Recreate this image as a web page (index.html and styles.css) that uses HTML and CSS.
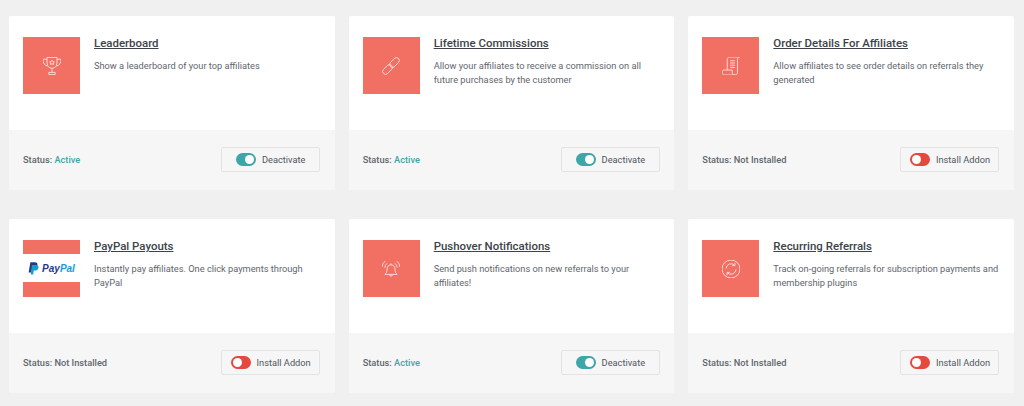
FILE: index.html
```html
<!DOCTYPE html>
<html>
  <head>
    <link rel="stylesheet" href="styles.css">
    <title>Addons</title>
  </head>
  <body>
    <div class="addon-grid">

      <div class="addon-card">
        <div class="addon-body">
          <div class="addon-icon">
            <svg viewBox="2.8 3 14.4 13.800" class="icon-svg">
              <path d="M6 3h8v4.500c0 2.500-1.800 4.200-4 4.200s-4-1.700-4-4.200z"/>
              <path d="M6 4.500H2.800c0 3 1 4.800 3.800 5.500M14 4.500h3.200c0 3-1 4.800-3.800 5.500"/>
              <path d="M10 11.700v3.300M7.500 15h5v1.800h-5z"/>
              <path d="M10 5.200l.7 1.200 1.200.2-.9.900.2 1.200-1.200-.6-1.200.6.200-1.200-.9-.9 1.200-.2z"/>
            </svg>
          </div>
          <div class="addon-text">
            <a class="addon-title">Leaderboard</a>
            <p class="addon-desc">Show a leaderboard of your top affiliates</p>
          </div>
        </div>
        <div class="addon-footer">
          <span class="addon-status">Status: <span class="status-active">Active</span></span>
          <button class="addon-button"><span class="toggle toggle-on"></span>Deactivate</button>
        </div>
      </div>

      <div class="addon-card">
        <div class="addon-body">
          <div class="addon-icon">
            <svg viewBox="3.500 3.500 13 13" class="icon-svg">
              <rect x="8.400" y="5.400" width="8.200" height="4.200" rx="2.100" transform="rotate(-45 12.500 7.500)"/>
              <rect x="3.400" y="10.400" width="8.200" height="4.200" rx="2.100" transform="rotate(-45 7.500 12.500)"/>
            </svg>
          </div>
          <div class="addon-text">
            <a class="addon-title">Lifetime Commissions</a>
            <p class="addon-desc">Allow your affiliates to receive a commission on all future purchases by the customer</p>
          </div>
        </div>
        <div class="addon-footer">
          <span class="addon-status">Status: <span class="status-active">Active</span></span>
          <button class="addon-button"><span class="toggle toggle-on"></span>Deactivate</button>
        </div>
      </div>

      <div class="addon-card">
        <div class="addon-body">
          <div class="addon-icon">
            <svg viewBox="2.500 2.500 14 14.500" class="icon-svg">
              <path d="M6.500 13V4.500C6.500 3.300 7.200 2.500 8.500 2.500h8c-1.200 0-1.800.8-1.800 2v10.500c0 1.200-.8 2-2 2"/>
              <path d="M2.500 14.500c0-1 .6-1.500 1.500-1.500h6.500v2c0 1.200.8 2 2.200 2H4.200c-1 0-1.700-.7-1.700-1.700z"/>
              <path d="M8.800 5.500h3.800M8.800 7.300h3.800M8.800 9.100h3.800M8.800 10.900h3.800"/>
            </svg>
          </div>
          <div class="addon-text">
            <a class="addon-title">Order Details For Affiliates</a>
            <p class="addon-desc">Allow affiliates to see order details on referrals they generated</p>
          </div>
        </div>
        <div class="addon-footer">
          <span class="addon-status">Status: Not Installed</span>
          <button class="addon-button"><span class="toggle toggle-off"></span>Install Addon</button>
        </div>
      </div>

      <div class="addon-card">
        <div class="addon-body">
          <div class="addon-icon addon-icon-paypal">
            <div class="paypal-strip">
              <svg viewBox="0 0 14 16" class="paypal-mark">
                <path fill="#253b80" d="M3 0h5.500c2.800 0 4 1.600 3.500 3.900-.5 2.700-2.400 4-4.900 4H5.100L4.200 13H.8z"/>
                <path fill="#179bd7" d="M5 3.500h4.800c2.600 0 3.900 1.300 3.500 3.500-.5 2.500-2.200 3.700-4.500 3.700H7.300L6.600 15.500H3.600z"/>
              </svg>
              <span class="paypal-word"><span class="pay-dark">Pay</span><span class="pay-light">Pal</span></span>
            </div>
          </div>
          <div class="addon-text">
            <a class="addon-title">PayPal Payouts</a>
            <p class="addon-desc">Instantly pay affiliates. One click payments through PayPal</p>
          </div>
        </div>
        <div class="addon-footer">
          <span class="addon-status">Status: Not Installed</span>
          <button class="addon-button"><span class="toggle toggle-off"></span>Install Addon</button>
        </div>
      </div>

      <div class="addon-card">
        <div class="addon-body">
          <div class="addon-icon">
            <svg viewBox="2 3.200 16 14" class="icon-svg">
              <path d="M10 6.500c-2.300 0-3.500 1.700-3.500 3.800 0 2.300-.6 3.700-2 4.700h11c-1.400-1-2-2.400-2-4.700 0-2.100-1.200-3.800-3.500-3.800z"/>
              <path d="M8.700 15.200a1.300 1.300 0 0 0 2.600 0M10 5.200v1.300"/>
              <path d="M6.500 5.200A5 5 0 0 0 4.500 9M4.800 3.200A7.500 7.500 0 0 0 2 8.500M13.500 5.200a5 5 0 0 1 2 3.800M15.200 3.200A7.500 7.500 0 0 1 18 8.500"/>
            </svg>
          </div>
          <div class="addon-text">
            <a class="addon-title">Pushover Notifications</a>
            <p class="addon-desc">Send push notifications on new referrals to your affiliates!</p>
          </div>
        </div>
        <div class="addon-footer">
          <span class="addon-status">Status: <span class="status-active">Active</span></span>
          <button class="addon-button"><span class="toggle toggle-on"></span>Deactivate</button>
        </div>
      </div>

      <div class="addon-card">
        <div class="addon-body">
          <div class="addon-icon">
            <svg viewBox="1.500 1.500 17 17" class="icon-svg">
              <circle cx="10" cy="10" r="8.500"/>
              <path d="M5.300 9.500a4.800 4.800 0 0 1 8.200-3M14.700 10.500a4.800 4.800 0 0 1-8.200 3"/>
              <path d="M13.700 4.200v2.600h-2.600M6.300 15.800v-2.600h2.600"/>
            </svg>
          </div>
          <div class="addon-text">
            <a class="addon-title">Recurring Referrals</a>
            <p class="addon-desc">Track on-going referrals for subscription payments and membership plugins</p>
          </div>
        </div>
        <div class="addon-footer">
          <span class="addon-status">Status: Not Installed</span>
          <button class="addon-button"><span class="toggle toggle-off"></span>Install Addon</button>
        </div>
      </div>

    </div>
  </body>
</html>
```

FILE: styles.css
```css
body {
  margin: 0;
  background-color: #f0f0f0;
  font-family: Roboto, "Liberation Sans", sans-serif;
  color: #50575e;
}

.addon-grid {
  display: grid;
  grid-template-columns: repeat(3, 1fr);
  column-gap: 14px;
  row-gap: 29px;
  padding: 16px 10px 0 9px;
}

.addon-card {
  height: 174px;
  background-color: white;
  border-radius: 2px;
  display: flex;
  flex-direction: column;
  overflow: hidden;
}

.addon-body {
  height: 114px;
  box-sizing: border-box;
  padding: 21px 14px 0 14px;
  display: flex;
  gap: 14px;
}

.addon-icon {
  width: 57px;
  height: 57px;
  flex-shrink: 0;
  background-color: #f26f63;
  display: flex;
  align-items: center;
  justify-content: center;
}

.icon-svg {
  width: 18px;
  height: 18px;
  fill: none;
  stroke: #fcd9d5;
  stroke-width: 1;
}

.icon-svg * {
  vector-effect: non-scaling-stroke;
}

.addon-icon-paypal {
  align-items: stretch;
  padding: 14px 0 15px 0;
  box-sizing: border-box;
}

.paypal-strip {
  flex: 1;
  background-color: white;
  display: flex;
  align-items: center;
  justify-content: center;
  gap: 3px;
}

.paypal-mark {
  width: 11px;
  height: 13px;
}

.paypal-word {
  font-family: "Liberation Sans", sans-serif;
  font-size: 10px;
  font-weight: bold;
  font-style: italic;
}

.pay-dark {
  color: #253b80;
}

.pay-light {
  color: #179bd7;
}

.addon-text {
  flex: 1;
}

.addon-title {
  display: block;
  width: fit-content;
  font-size: 11.450px;
  line-height: 13px;
  font-weight: 500;
  color: #3c434a;
  text-decoration: underline;
}

.addon-desc {
  margin: 9px 0 0 0;
  font-size: 9.250px;
  line-height: 14px;
  color: #5f666d;
}

.addon-footer {
  flex: 1;
  background-color: #f6f6f6;
  display: flex;
  align-items: center;
  justify-content: space-between;
  padding: 0 14.500px 1px 14px;
}

.addon-status {
  font-size: 9.250px;
  font-weight: 500;
  color: #5f666d;
}

.status-active {
  color: #3fa5a8;
}

.addon-button {
  width: 99px;
  height: 25px;
  display: flex;
  align-items: center;
  justify-content: center;
  gap: 6px;
  padding: 0;
  background-color: #f6f6f6;
  border: 1px solid #e3e3e3;
  border-radius: 2px;
  font-family: Roboto, "Liberation Sans", sans-serif;
  font-size: 9.250px;
  color: #50575e;
}

.toggle {
  position: relative;
  width: 20px;
  height: 13px;
  border-radius: 7px;
  display: inline-block;
}

.toggle::after {
  content: "";
  position: absolute;
  top: 2px;
  width: 9px;
  height: 9px;
  border-radius: 50%;
  background-color: white;
}

.toggle-on {
  background-color: #3fa5a8;
}

.toggle-on::after {
  right: 2px;
}

.toggle-off {
  background-color: #e5483f;
}

.toggle-off::after {
  left: 2px;
}
```
